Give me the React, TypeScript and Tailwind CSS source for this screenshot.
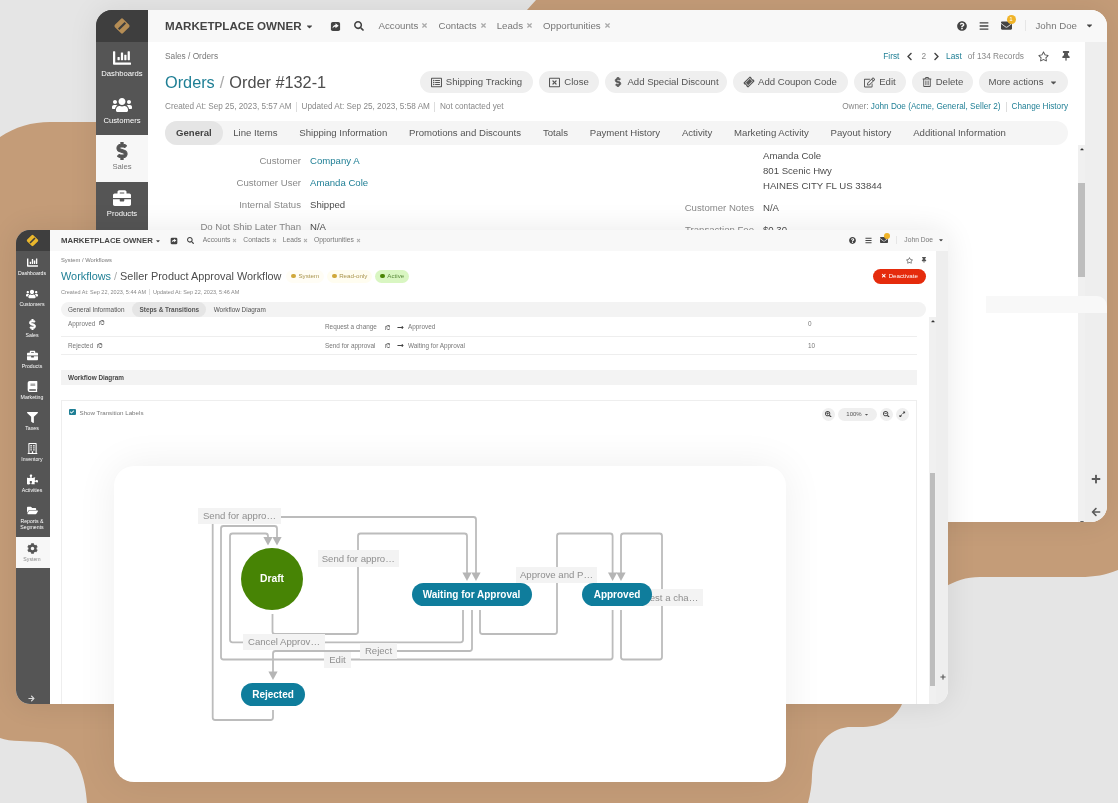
import type { ReactNode } from 'react';
import {
	FaArrowLeft,
	FaArrowRight,
	FaBars,
	FaBook,
	FaBriefcase,
	FaCaretDown,
	FaCaretUp,
	FaChartBar,
	FaCheck,
	FaChevronLeft,
	FaChevronRight,
	FaCog,
	FaDollarSign,
	FaEnvelope,
	FaExpandAlt,
	FaFilter,
	FaFolderOpen,
	FaLongArrowAltRight,
	FaPlus,
	FaPuzzlePiece,
	FaQuestionCircle,
	FaRegBuilding,
	FaRegCopy,
	FaRegEdit,
	FaRegListAlt,
	FaRegStar,
	FaRegTrashAlt,
	FaRegWindowClose,
	FaSearch,
	FaSearchMinus,
	FaSearchPlus,
	FaTicketAlt,
	FaThumbtack,
	FaTimes,
	FaUsers,
} from 'react-icons/fa';

const Logo = ({ size, color }: { size: number; color: string }) => (
	<svg width={size} height={size} viewBox="0 0 24 24">
		<rect x="5" y="5" width="14" height="14" rx="2" fill={color} transform="rotate(45 12 12)" />
		<path d="M7 15 L15 7" stroke="#3e3e3e" strokeWidth="2.6" transform="translate(1 1)" />
	</svg>
);

const ShareBox = ({ size }: { size: number }) => (
	<svg width={size} height={size} viewBox="0 0 24 24">
		<rect x="2" y="2" width="20" height="20" rx="4" fill="#444444" />
		<path d="M12 5 L19 10.5 L12 16 L12 12.5 C9 12.5 7 13.5 5.5 16.5 C5.5 11.5 8 8.5 12 8.5 Z" fill="#f8f8f8" />
	</svg>
);

const BackgroundBlob = () => (
	<svg className="absolute inset-0" width="1118" height="803" viewBox="0 0 1118 803">
		<path
			fill="#c49c78"
			d="M536 0 L1118 0 L1118 570 C1105 575 1095 577 1080 577 L980 577 C966 577 955 581 945 587 L902 704 C895 720 880 727 860 727 L848 727 C825 730 813 750 812 775 C812 785 810 795 808 803 L87 803 C86 790 84 778 79 767 C72 752 58 743 40 742 L20 741 C12 741 5 740 0 738 L0 137 C15 127 32 122 50 122 L300 122 L500 40 Z"
		/>
	</svg>
);

const BigNavItem = ({ icon, label, active }: { icon: ReactNode; label: string; active?: boolean }) => (
	<div
		className={`flex h-[46.5px] flex-col items-center pt-[7px] ${active ? 'bg-[#f7f7f7] text-[#555555]' : 'text-white'}`}
	>
		<div className="flex h-[18px] items-center text-[18px]">{icon}</div>
		<div className={`mt-[2px] text-[7.7px] leading-[10px] ${active ? 'text-[#777777]' : ''}`}>{label}</div>
	</div>
);

const TopLink = ({ label }: { label: string }) => (
	<span className="flex items-center">
		{label}
		<FaTimes className="ml-[3px] text-[7px] text-[#aaaaaa]" />
	</span>
);

const ActionButton = ({ icon, label, width }: { icon: ReactNode; label: string; width: string }) => (
	<div
		className={`flex h-[22px] items-center justify-center gap-[4px] rounded-full bg-[#efefef] text-[9.6px] text-[#555555] ${width}`}
	>
		{icon}
		{label}
	</div>
);

const Field = ({ label, children }: { label: string; children: ReactNode }) => (
	<div className="flex h-[22px] items-center text-[9.6px]">
		<div className="w-[136px] text-right text-[#8a8a8a]">{label}</div>
		<div className="ml-[9px] text-[#4d4d4d]">{children}</div>
	</div>
);

const BigWindow = () => (
	<div className="absolute left-[96px] top-[10px] flex h-[512px] w-[1011px] overflow-hidden rounded-[16px] bg-white shadow-[0_0_30px_rgba(0,0,0,0.08)]">
		<aside className="w-[52px] shrink-0 bg-[#555555]">
			<div className="flex h-[32px] items-center justify-center bg-[#3e3e3e]">
				<Logo size={20} color="#b58d55" />
			</div>
			<BigNavItem icon={<FaChartBar />} label="Dashboards" />
			<BigNavItem icon={<FaUsers className="text-[20px]" />} label="Customers" />
			<BigNavItem icon={<FaDollarSign className="stroke-[30px]" />} label="Sales" active />
			<BigNavItem icon={<FaBriefcase />} label="Products" />
		</aside>
		<div className="flex min-w-0 flex-1 flex-col">
			<div className="flex h-[32px] shrink-0 items-center bg-[#f8f8f8] pl-[17px] pr-[13px] text-[9.7px] text-[#777777]">
				<span className="text-[11.6px] font-bold text-[#444444]">MARKETPLACE OWNER</span>
				<FaCaretDown className="ml-[3px] text-[9px] text-[#444444]" />
				<span className="ml-[16px]">
					<ShareBox size={11} />
				</span>
				<FaSearch className="ml-[13px] text-[10px] text-[#444444]" />
				<div className="ml-[15px] flex gap-[10px]">
					<TopLink label="Accounts" />
					<TopLink label="Contacts" />
					<TopLink label="Leads" />
					<TopLink label="Opportunities" />
				</div>
				<div className="ml-auto flex items-center text-[#444444]">
					<FaQuestionCircle className="text-[10px]" />
					<FaBars className="ml-[12px] text-[10px]" />
					<div className="relative ml-[12px]">
						<FaEnvelope className="text-[11px]" />
						<span className="absolute left-[6px] top-[-5px] flex h-[9px] w-[9px] items-center justify-center rounded-full bg-[#f0b429] text-[6px] text-white">
							1
						</span>
					</div>
					<div className="ml-[13px] h-[11px] w-px bg-[#e6e6e6]" />
					<span className="ml-[10px] text-[#777777]">John Doe</span>
					<FaCaretDown className="ml-[8px] text-[9px]" />
				</div>
			</div>
			<div className="flex min-h-0 flex-1">
				<div className="flex min-w-0 flex-1 flex-col pl-[17px]">
					<div className="mt-[6px] flex h-[16px] items-center justify-between pr-[14px]">
						<span className="text-[8.3px] text-[#777777]">Sales / Orders</span>
						<div className="flex items-center text-[8.3px] text-[#888888]">
							<span className="text-[#1f7f95]">First</span>
							<FaChevronLeft className="ml-[6px] text-[9px] text-[#444444]" />
							<span className="ml-[7px]">2</span>
							<FaChevronRight className="ml-[6px] text-[9px] text-[#444444]" />
							<span className="ml-[5px] text-[#1f7f95]">Last</span>
							<span className="ml-[6px]">of 134 Records</span>
							<FaRegStar className="ml-[14px] text-[11px] text-[#555555]" />
							<FaThumbtack className="ml-[12px] text-[10px] text-[#555555]" />
						</div>
					</div>
					<div className="mt-[7px] flex h-[22px] items-center justify-between pr-[17px]">
						<div className="text-[16.3px] text-[#4d4d4d]">
							<span className="text-[#1f7f95]">Orders</span>
							<span className="mx-[5px] text-[#aaaaaa]">/</span>
							Order #132-1
						</div>
						<div className="flex gap-[6px]">
							<ActionButton width="w-[113px]" icon={<FaRegListAlt className="text-[11px]" />} label="Shipping Tracking" />
							<ActionButton width="w-[60px]" icon={<FaRegWindowClose className="text-[11px]" />} label="Close" />
							<ActionButton width="w-[122px]" icon={<FaDollarSign className="stroke-[30px] text-[10px]" />} label="Add Special Discount" />
							<ActionButton width="w-[115px]" icon={<FaTicketAlt className="-rotate-45 text-[10px]" />} label="Add Coupon Code" />
							<ActionButton width="w-[52px]" icon={<FaRegEdit className="text-[11px]" />} label="Edit" />
							<ActionButton width="w-[61px]" icon={<FaRegTrashAlt className="text-[10px]" />} label="Delete" />
							<div className="flex h-[22px] w-[89px] items-center justify-center gap-[6px] rounded-full bg-[#efefef] text-[9.6px] text-[#555555]">
								More actions
								<FaCaretDown className="text-[9px]" />
							</div>
						</div>
					</div>
					<div className="mt-[7px] flex h-[15px] items-center justify-between pr-[17px] text-[8.2px] text-[#888888]">
						<div className="flex items-center">
							<span>Created At: Sep 25, 2023, 5:57 AM</span>
							<span className="mx-[4.5px] h-[10px] w-px bg-[#dddddd]" />
							<span>Updated At: Sep 25, 2023, 5:58 AM</span>
							<span className="mx-[4.5px] h-[10px] w-px bg-[#dddddd]" />
							<span>Not contacted yet</span>
						</div>
						<div className="flex items-center">
							<span>Owner:&nbsp;</span>
							<span className="text-[#1f7f95]">John Doe (Acme, General, Seller 2)</span>
							<span className="mx-[5px] h-[10px] w-px bg-[#dddddd]" />
							<span className="text-[#1f7f95]">Change History</span>
						</div>
					</div>
					<div className="mr-[17px] mt-[6px] flex h-[24px] shrink-0 items-center rounded-full bg-[#f5f5f5] text-[9.6px] text-[#555555]">
						<span className="flex h-full items-center rounded-full bg-[#e5e5e5] px-[11px] font-bold text-[#444444]">General</span>
						<span className="ml-[10.5px]">Line Items</span>
						<span className="ml-[21.8px]">Shipping Information</span>
						<span className="ml-[21.8px]">Promotions and Discounts</span>
						<span className="ml-[21.8px]">Totals</span>
						<span className="ml-[21.8px]">Payment History</span>
						<span className="ml-[21.8px]">Activity</span>
						<span className="ml-[21.8px]">Marketing Activity</span>
						<span className="ml-[21.8px]">Payout history</span>
						<span className="ml-[21.8px]">Additional Information</span>
					</div>
					<div className="flex min-h-0 flex-1">
						<div className="w-[453px] pt-[5px]">
							<Field label="Customer">
								<span className="text-[#1f7f95]">Company A</span>
							</Field>
							<Field label="Customer User">
								<span className="text-[#1f7f95]">Amanda Cole</span>
							</Field>
							<Field label="Internal Status">Shipped</Field>
							<Field label="Do Not Ship Later Than">N/A</Field>
						</div>
						<div className="flex-1 pt-[3px]">
							<div className="ml-[145px] text-[9.6px] leading-[15px] text-[#4d4d4d]">
								<div>Amanda Cole</div>
								<div>801 Scenic Hwy</div>
								<div>HAINES CITY FL US 33844</div>
							</div>
							<div className="mt-[4px]">
								<Field label="Customer Notes">N/A</Field>
								<Field label="Transaction Fee">$0.30</Field>
							</div>
						</div>
						<div className="relative w-[7px] shrink-0 bg-[#f0f0f0]">
							<FaCaretUp className="absolute left-[1px] top-[1px] text-[6px] text-[#333333]" />
							<div className="absolute left-0 top-[38px] h-[94px] w-[7px] bg-[#bdbdbd]" />
							<FaCaretDown className="absolute bottom-[-3px] left-[1px] text-[6px] text-[#333333]" />
						</div>
					</div>
				</div>
				<div className="relative w-[22px] shrink-0 bg-[#eeeeee]">
					<FaPlus className="absolute left-[6px] top-[432px] text-[10px] text-[#5a5a5a]" />
					<FaArrowLeft className="absolute left-[6px] top-[465px] text-[10px] text-[#5a5a5a]" />
				</div>
			</div>
		</div>
	</div>
);

const SmallNavItem = ({ icon, label, active, tall }: { icon: ReactNode; label: ReactNode; active?: boolean; tall?: boolean }) => (
	<div
		className={`flex flex-col items-center pr-[2px] pt-[6px] ${tall ? 'h-[38px]' : 'h-[31px]'} ${active ? 'bg-[#f7f7f7] text-[#555555]' : 'text-white'}`}
	>
		<div className="flex h-[11px] items-center text-[11px]">{icon}</div>
		<div className={`mt-[2px] text-center text-[5.2px] leading-[6px] ${active ? 'text-[#888888]' : ''}`}>{label}</div>
	</div>
);

const SmallLink = ({ label }: { label: string }) => (
	<span className="flex items-center">
		{label}
		<FaTimes className="ml-[2px] text-[5px] text-[#aaaaaa]" />
	</span>
);

const StatusBadge = ({ label, dot, text, bg }: { label: string; dot: string; text: string; bg: string }) => (
	<span className={`flex h-[13px] items-center gap-[2.5px] rounded-full px-[5px] text-[6.2px] ${bg} ${text}`}>
		<span className={`h-[4.5px] w-[4.5px] rounded-full ${dot}`} />
		{label}
	</span>
);

const ZoomButton = ({ children }: { children: ReactNode }) => (
	<span className="flex h-[13px] w-[13px] items-center justify-center rounded-full bg-[#efefef] text-[6.5px] text-[#444444]">
		{children}
	</span>
);

const SmallWindow = () => (
	<div className="absolute left-[16px] top-[230px] flex h-[474px] w-[932px] overflow-hidden rounded-[14px] bg-white shadow-[0_0_30px_rgba(0,0,0,0.09)]">
		<aside className="relative w-[34px] shrink-0 bg-[#555555]">
			<div className="flex h-[21px] items-center justify-center bg-[#3e3e3e] pr-[2px]">
				<Logo size={15} color="#eab72c" />
			</div>
			<SmallNavItem icon={<FaChartBar />} label="Dashboards" />
			<SmallNavItem icon={<FaUsers className="text-[12px]" />} label="Customers" />
			<SmallNavItem icon={<FaDollarSign className="stroke-[30px]" />} label="Sales" />
			<SmallNavItem icon={<FaBriefcase />} label="Products" />
			<SmallNavItem icon={<FaBook />} label="Marketing" />
			<SmallNavItem icon={<FaFilter />} label="Taxes" />
			<SmallNavItem icon={<FaRegBuilding />} label="Inventory" />
			<SmallNavItem icon={<FaPuzzlePiece />} label="Activities" />
			<SmallNavItem
				icon={<FaFolderOpen />}
				label={
					<>
						Reports &amp;
						<br />
						Segments
					</>
				}
				tall
			/>
			<SmallNavItem icon={<FaCog />} label="System" active />
			<FaArrowRight className="absolute bottom-[2px] left-[12px] text-[7px] text-[#dddddd]" />
		</aside>
		<div className="flex min-w-0 flex-1 flex-col">
			<div className="flex h-[21px] shrink-0 items-center bg-[#f8f8f8] pl-[11px] pr-[4px] text-[6.7px] text-[#777777]">
				<span className="text-[7.8px] font-bold text-[#444444]">MARKETPLACE OWNER</span>
				<FaCaretDown className="ml-[2px] text-[6px] text-[#444444]" />
				<span className="ml-[9px]">
					<ShareBox size={8} />
				</span>
				<FaSearch className="ml-[9px] text-[7px] text-[#444444]" />
				<div className="ml-[9px] flex gap-[6px]">
					<SmallLink label="Accounts" />
					<SmallLink label="Contacts" />
					<SmallLink label="Leads" />
					<SmallLink label="Opportunities" />
				</div>
				<div className="ml-auto flex items-center text-[#444444]">
					<FaQuestionCircle className="text-[7px]" />
					<FaBars className="ml-[8.5px] text-[7px]" />
					<div className="relative ml-[8.5px]">
						<FaEnvelope className="text-[8px]" />
						<span className="absolute left-[4px] top-[-3px] h-[6px] w-[6px] rounded-full bg-[#f0b429]" />
					</div>
					<div className="ml-[8px] h-[8px] w-px bg-[#e6e6e6]" />
					<span className="ml-[7px] text-[#777777]">John Doe</span>
					<FaCaretDown className="ml-[5px] text-[6px]" />
				</div>
			</div>
			<div className="flex min-h-0 flex-1">
				<div className="flex min-w-0 flex-1 flex-col pl-[11px]">
					<div className="mt-[4px] flex h-[10px] items-center justify-between pr-[9px]">
						<span className="text-[5.8px] text-[#777777]">System / Workflows</span>
						<div className="flex items-center text-[#555555]">
							<FaRegStar className="text-[7px]" />
							<FaThumbtack className="ml-[8px] text-[6px]" />
						</div>
					</div>
					<div className="mt-[3px] flex h-[16px] items-center pr-[10px]">
						<div className="text-[10.9px] text-[#4d4d4d]">
							<span className="text-[#1f7f95]">Workflows</span>
							<span className="mx-[3px] text-[#aaaaaa]">/</span>
							Seller Product Approval Workflow
						</div>
						<div className="ml-[5px] flex gap-[3px]">
							<StatusBadge label="System" dot="bg-[#d0a83a]" text="text-[#a8934a]" bg="bg-[#fffdf5]" />
							<StatusBadge label="Read-only" dot="bg-[#d0a83a]" text="text-[#a8934a]" bg="bg-[#fffdf0]" />
							<StatusBadge label="Active" dot="bg-[#4a8505]" text="text-[#5a8a3a]" bg="bg-[#d9f6c2]" />
						</div>
						<div className="ml-auto flex h-[15px] w-[53px] items-center justify-center gap-[2px] rounded-full bg-[#e52b0c] text-[6.2px] text-white">
							<FaTimes className="text-[5.5px]" />
							Deactivate
						</div>
					</div>
					<div className="mt-[3.5px] flex h-[9px] items-center text-[5.5px] text-[#888888]">
						<span>Created At: Sep 22, 2023, 5:44 AM</span>
						<span className="mx-[3px] h-[6px] w-px bg-[#dddddd]" />
						<span>Updated At: Sep 22, 2023, 5:46 AM</span>
					</div>
					<div className="mr-[10px] mt-[5.5px] flex h-[15px] shrink-0 items-center rounded-full bg-[#f3f3f3] pl-[7px] text-[6.4px] text-[#555555]">
						<span>General Information</span>
						<span className="ml-[8px] flex h-full items-center rounded-full bg-[#e5e5e5] px-[7px] font-bold text-[#555555]">Steps &amp; Transitions</span>
						<span className="ml-[7.5px]">Workflow Diagram</span>
					</div>
					<div className="flex min-h-0 flex-1">
						<div className="flex min-w-0 flex-1 flex-col pr-[12px] text-[6.4px] text-[#777777]">
							<div className="flex h-[20px] shrink-0 border-b border-[#eeeeee]">
								<div className="flex w-[264px] items-start pl-[7px] pt-[1.5px]">
									<span>Approved</span>
									<FaRegCopy className="ml-[4px] mt-[1px] text-[5.5px] text-[#444444]" />
								</div>
								<div className="flex w-[483px] items-end pb-[4px]">
									<span className="w-[59.5px]">Request a change</span>
									<FaRegCopy className="mb-[2px] text-[5.5px] text-[#444444]" />
									<FaLongArrowAltRight className="mb-[1px] ml-[6.5px] text-[7px] text-[#444444]" />
									<span className="ml-[4.5px]">Approved</span>
								</div>
								<div className="pt-[1.5px]">0</div>
							</div>
							<div className="flex h-[18px] shrink-0 items-center border-b border-[#eeeeee]">
								<div className="flex w-[264px] items-center pl-[7px]">
									<span>Rejected</span>
									<FaRegCopy className="ml-[4px] text-[5.5px] text-[#444444]" />
								</div>
								<div className="flex w-[483px] items-center">
									<span className="w-[59.5px]">Send for approval</span>
									<FaRegCopy className="text-[5.5px] text-[#444444]" />
									<FaLongArrowAltRight className="ml-[6.5px] text-[7px] text-[#444444]" />
									<span className="ml-[4.5px]">Waiting for Approval</span>
								</div>
								<div>10</div>
							</div>
							<div className="mt-[15px] flex h-[15px] shrink-0 items-center bg-[#f3f3f3] pl-[7px] font-bold text-[#444444]">Workflow Diagram</div>
							<div className="mt-[14.5px] flex min-h-0 flex-1 items-start justify-between border border-b-0 border-[#eeeeee] pl-[7px] pr-[7px] pt-[7px]">
								<div className="flex items-center gap-[4px] text-[6.2px] text-[#777777]">
									<span className="flex h-[6.5px] w-[6.5px] items-center justify-center rounded-[1px] bg-[#1f7f95] text-[4px] text-white">
										<FaCheck />
									</span>
									Show Transition Labels
								</div>
								<div className="flex items-center gap-[3px] text-[6px] text-[#555555]">
									<ZoomButton>
										<FaSearchPlus />
									</ZoomButton>
									<span className="flex h-[13px] w-[39px] items-center justify-center gap-[2px] rounded-full bg-[#efefef]">
										100%
										<FaCaretDown className="text-[5px]" />
									</span>
									<ZoomButton>
										<FaSearchMinus />
									</ZoomButton>
									<ZoomButton>
										<FaExpandAlt />
									</ZoomButton>
								</div>
							</div>
						</div>
						<div className="relative w-[7px] shrink-0 bg-[#f0f0f0]">
							<FaCaretUp className="absolute left-[1px] top-[1px] text-[6px] text-[#333333]" />
							<div className="absolute left-[1px] top-[156px] h-[213px] w-[5px] bg-[#bdbdbd]" />
							<FaPlus className="absolute left-[11px] top-[357px] text-[6px] text-[#555555]" />
						</div>
					</div>
				</div>
				<div className="w-[12px] shrink-0 bg-[#eeeeee]" />
			</div>
		</div>
	</div>
);

type Point = [number, number];

// polyline with small rounded corners
const routePath = (points: Point[], r = 2.5) => {
	let d = `M${points[0][0]} ${points[0][1]}`;
	for (let i = 1; i < points.length - 1; i++) {
		const [x, y] = points[i];
		const [px, py] = points[i - 1];
		const [nx, ny] = points[i + 1];
		const inX = Math.sign(x - px) * r;
		const inY = Math.sign(y - py) * r;
		const outX = Math.sign(nx - x) * r;
		const outY = Math.sign(ny - y) * r;
		d += ` L${x - inX} ${y - inY} Q${x} ${y} ${x + outX} ${y + outY}`;
	}
	const last = points[points.length - 1];
	return `${d} L${last[0]} ${last[1]}`;
};

const edges: Point[][] = [
	[[281, 517], [476, 517], [476, 574]],
	[[272.5, 614], [272.5, 634], [358, 634], [358, 533.5], [467, 533.5], [467, 574]],
	[[612.6, 610], [612.6, 659.5], [221, 659.5], [221, 526], [277, 526], [277, 538]],
	[[463, 610], [463, 642.3], [230, 642.3], [230, 533.5], [268, 533.5], [268, 538]],
	[[472, 610], [472, 651], [273, 651], [273, 673]],
	[[273, 710], [273, 720], [212.7, 720], [212.7, 517]],
	[[480, 610], [480, 634], [557, 634], [557, 533.5], [612.6, 533.5], [612.6, 574]],
	[[621, 610], [621, 659.5], [662, 659.5], [662, 533.5], [621, 533.5], [621, 574]],
];

const arrows: Point[] = [
	[476, 581],
	[467, 581],
	[277, 545.5],
	[268, 545.5],
	[273, 680],
	[612.6, 581],
	[621, 581],
];

const edgeLabels = [
	{ text: 'Send for appro…', x: 198, y: 508, w: 83, h: 16 },
	{ text: 'Send for appro…', x: 317.5, y: 550, w: 81.5, h: 17 },
	{ text: 'Cancel Approv…', x: 243, y: 634, w: 82, h: 16 },
	{ text: 'Reject', x: 360, y: 643, w: 37, h: 16 },
	{ text: 'Edit', x: 324, y: 652, w: 27, h: 16 },
	{ text: 'Approve and P…', x: 516, y: 567, w: 81, h: 16 },
	{ text: 'Request a cha…', x: 622, y: 589, w: 81, h: 17 },
];

const nodes = [
	{ text: 'Waiting for Approval', x: 411.5, y: 583, w: 120, h: 23 },
	{ text: 'Approved', x: 582, y: 583, w: 70, h: 23 },
	{ text: 'Rejected', x: 241, y: 683, w: 64, h: 23 },
];

const DiagramCard = () => (
	<div className="absolute left-[114px] top-[466px] h-[316px] w-[672px] rounded-[20px] bg-white shadow-[0_0_40px_rgba(0,0,0,0.07)]">
		<svg className="absolute inset-0" width="672" height="316" viewBox="114 466 672 316" fill="none">
			{edges.map((points, i) => (
				<path key={i} d={routePath(points)} stroke="#bcbcbc" strokeWidth="1.8" />
			))}
			{arrows.map(([x, y], i) => (
				<polygon key={i} points={`${x - 4.6},${y - 8.5} ${x + 4.6},${y - 8.5} ${x},${y}`} fill="#b5b5b5" />
			))}
		</svg>
		{edgeLabels.map((label) => (
			<div
				key={`${label.text}-${label.x}`}
				className="absolute flex items-center justify-center bg-[#f3f3f3] pt-[1px] text-[9.6px] text-[#8f8f8f]"
				style={{ left: label.x - 114, top: label.y - 466, width: label.w, height: label.h }}
			>
				{label.text}
			</div>
		))}
		<div className="absolute left-[127px] top-[82px] flex h-[62px] w-[62px] items-center justify-center rounded-full bg-[#478405] text-[10.3px] font-bold text-white">
			Draft
		</div>
		{nodes.map((node) => (
			<div
				key={node.text}
				className="absolute flex items-center justify-center rounded-full bg-[#0f7d9c] text-[10px] font-bold text-white"
				style={{ left: node.x - 114, top: node.y - 466, width: node.w, height: node.h }}
			>
				{node.text}
			</div>
		))}
	</div>
);

const App = () => {
	return (
		<div className="relative h-[803px] w-[1118px] overflow-hidden bg-[#e5e5e5] font-['Liberation_Sans',Arial,sans-serif] blur-[0.45px]">
			<BackgroundBlob />
			<BigWindow />
			<div className="absolute left-[986px] top-[296px] h-[17px] w-[121px] rounded-tr-[10px] bg-[#f8f8f8]" />
			<SmallWindow />
			<DiagramCard />
		</div>
	);
};

export default App;
